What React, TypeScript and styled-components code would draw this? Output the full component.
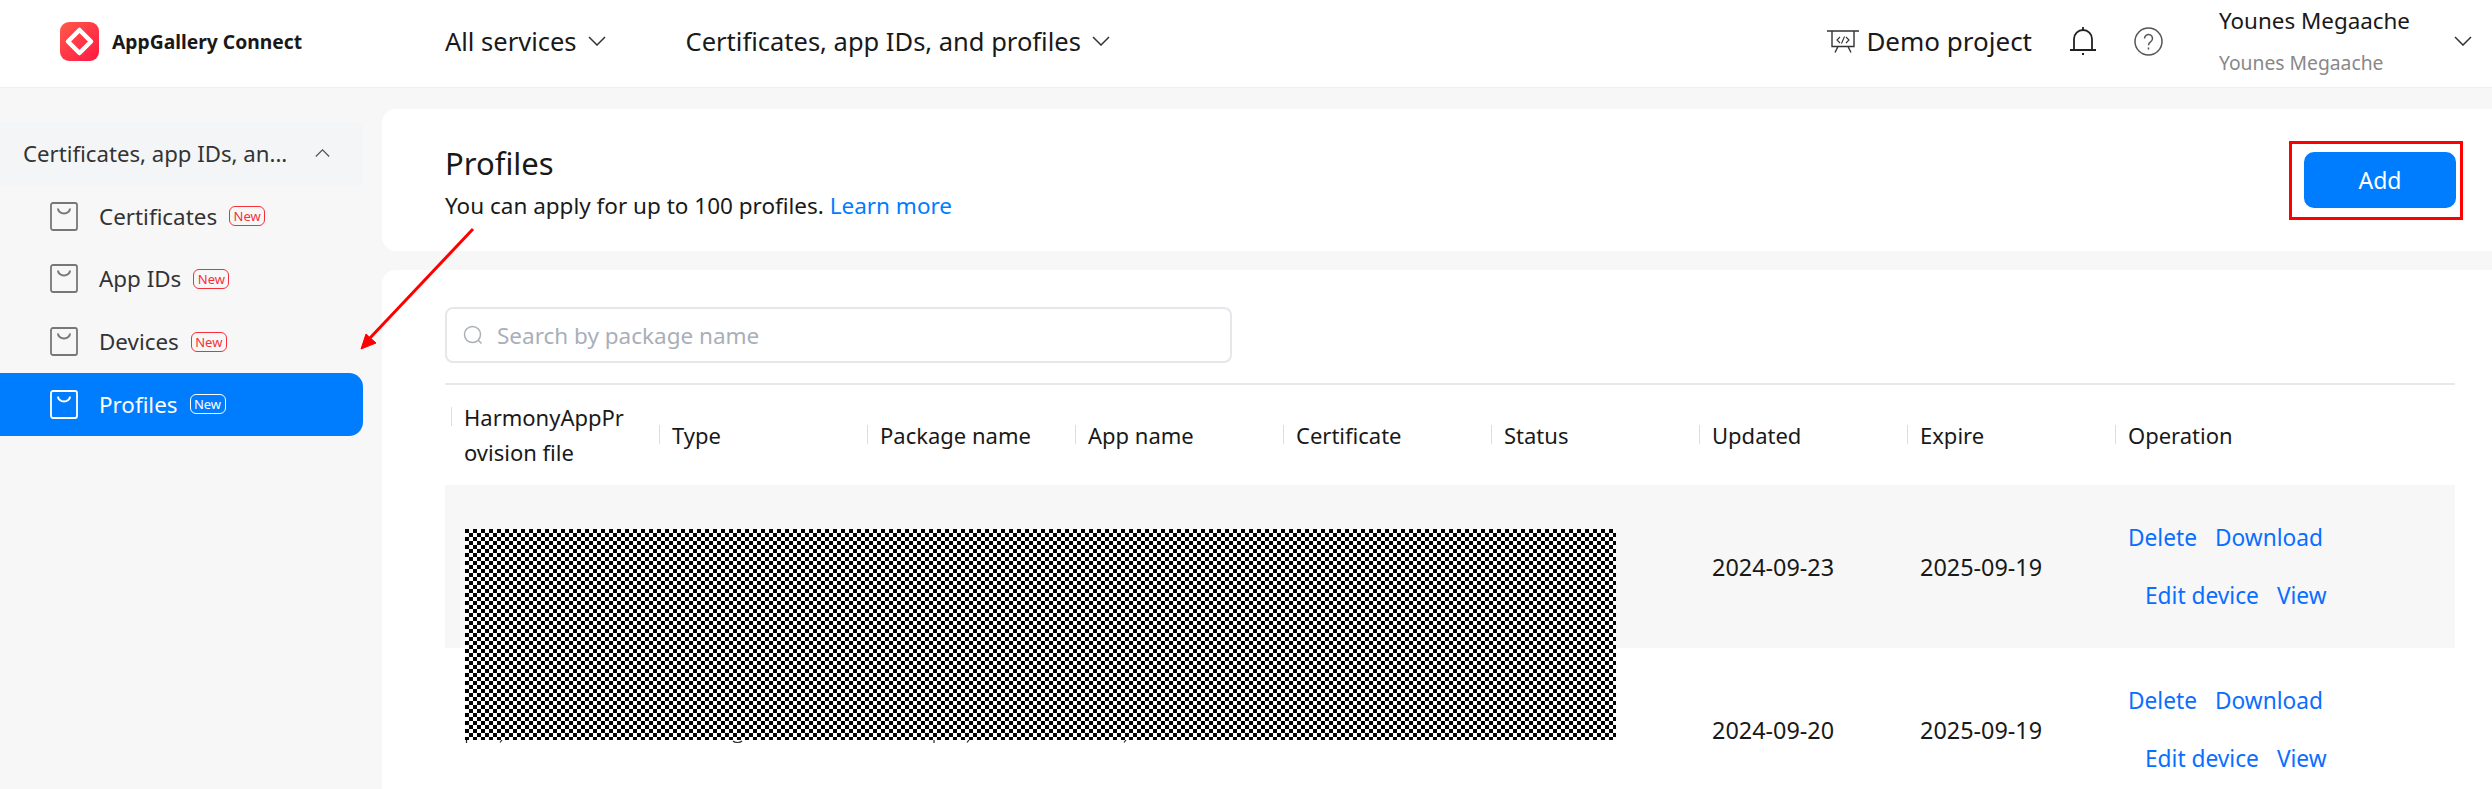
import styled, { createGlobalStyle } from 'styled-components'

const colors = {
  page: '#f7f7f7',
  text: '#191919',
  blue: '#007dff',
  link: '#0a6eff',
  red: '#f5303c',
  border: '#e6e6eb',
}

const GlobalStyle = createGlobalStyle`
  html, body {
    margin: 0;
    padding: 0;
    background: ${colors.page};
    font-family: "Noto Sans", "Open Sans", sans-serif;
    color: ${colors.text};
  }
`

const Page = styled.div`
  position: relative;
  width: 2492px;
  height: 789px;
  overflow: hidden;
`

const TopBar = styled.header`
  display: flex;
  align-items: center;
  height: 88px;
  padding-bottom: 5px;
  background: #fff;
  border-bottom: 1px solid #efefef;
  box-sizing: border-box;
`

const Brand = styled.div`
  display: flex;
  align-items: center;
  gap: 13px;
  width: 445px;
  padding-left: 60px;
  box-sizing: border-box;
  font-size: 19.3px;
  font-weight: 700;
`

const NavItem = styled.div`
  display: flex;
  align-items: center;
  gap: 11px;
  margin-right: 80px;
  font-size: 25.5px;
`

const TopRight = styled.div`
  display: flex;
  align-items: center;
  margin-left: auto;
  height: 100%;
`

const Project = styled.div`
  display: flex;
  align-items: center;
  gap: 7px;
  font-size: 26px;
  margin-right: 37px;
`

const IconSlot = styled.div`
  display: flex;
  margin-right: 37px;
`

const Account = styled.div`
  display: flex;
  flex-direction: column;
  justify-content: space-between;
  height: 68px;
  margin-left: 56px;
  width: 235px;
`

const AccountName = styled.div`
  font-size: 22.4px;
  line-height: 28px;
`

const AccountSub = styled.div`
  font-size: 19.3px;
  line-height: 24px;
  color: #888;
`

const Caret = styled.div`
  display: flex;
  margin-right: 20px;
`

const Body = styled.div`
  display: flex;
`

const Sidebar = styled.nav`
  flex: 0 0 382px;
  padding: 34px 19px 0 0;
  box-sizing: border-box;
`

const GroupRow = styled.div`
  display: flex;
  align-items: center;
  justify-content: space-between;
  height: 63px;
  padding: 0 33px 0 23px;
  background: #f4f5f7;
  font-size: 22.2px;
  color: #333;
`

const MenuRow = styled.div<{ $active?: boolean }>`
  display: flex;
  align-items: center;
  height: 62.67px;
  padding-left: 50px;
  font-size: 22.4px;
  border-radius: 0 14px 14px 0;
  color: ${(p) => (p.$active ? '#fff' : '#333')};
  background: ${(p) => (p.$active ? colors.blue : 'transparent')};
`

const MenuLabel = styled.span`
  margin: 0 12px 0 21px;
`

const NewBadge = styled.span<{ $active?: boolean }>`
  display: inline-flex;
  align-items: center;
  justify-content: center;
  width: 36px;
  height: 20px;
  box-sizing: border-box;
  border: 1px solid ${(p) => (p.$active ? '#fff' : colors.red)};
  border-radius: 6px;
  font-size: 13px;
  color: ${(p) => (p.$active ? '#fff' : colors.red)};
`

const Main = styled.main`
  flex: 1;
  display: flex;
  flex-direction: column;
  gap: 19px;
  padding-top: 21px;
`

const Panel = styled.section`
  background: #fff;
  border-radius: 14px 0 0 14px;
`

const TitlePanel = styled(Panel)`
  display: flex;
  align-items: center;
  justify-content: space-between;
  height: 142px;
  padding: 0 36px 0 63px;
`

const TitleBlock = styled.div`
  padding-top: 3px;
`

const Title = styled.h1`
  margin: 0 0 8px;
  font-size: 31px;
  font-weight: 400;
  line-height: 40px;
`

const Description = styled.p`
  margin: 0;
  font-size: 22.5px;
  line-height: 30px;
`

const TextLink = styled.a`
  color: ${colors.blue};
`

const AddWrap = styled.div`
  position: relative;
`

const AddButton = styled.button`
  display: block;
  width: 152px;
  height: 56px;
  border: none;
  border-radius: 10px;
  background: ${colors.blue};
  color: #fff;
  font-family: inherit;
  font-size: 23px;
`

const Highlight = styled.div`
  position: absolute;
  top: -11px;
  right: -7px;
  bottom: -12px;
  left: -15px;
  border: 3px solid #f00;
`

const ListPanel = styled(Panel)`
  padding: 37px 37px 0 63px;
`

const Search = styled.div`
  display: flex;
  align-items: center;
  gap: 14px;
  width: 787px;
  height: 56px;
  padding-left: 16px;
  box-sizing: border-box;
  border: 2px solid ${colors.border};
  border-radius: 8px;
  font-size: 22.5px;
  color: #a9afb8;
`

const Table = styled.div`
  margin-top: 20px;
  border-top: 2px solid #e8e8e8;
`

const Columns = styled.div`
  display: grid;
  grid-template-columns: repeat(8, 208px) 1fr;
  align-items: center;
  padding-left: 6px;
`

const HeadRow = styled(Columns)`
  height: 100px;
  font-size: 22px;
`

const HeadCell = styled.div`
  position: relative;
  padding: 0 24px 0 13px;
  line-height: 35px;
  overflow-wrap: anywhere;

  &::before {
    content: '';
    position: absolute;
    left: 0;
    top: 7px;
    height: 19px;
    width: 1px;
    background: #ddd;
  }
`

const Rows = styled.div`
  position: relative;
`

const Row = styled(Columns)<{ $shaded?: boolean }>`
  height: 163px;
  font-size: 22.7px;
  background: ${(p) => (p.$shaded ? colors.page : '#fff')};
`

const DateCell = styled.div<{ $col: number }>`
  grid-column: ${(p) => p.$col};
  padding-left: 13px;
  font-size: 23.4px;
`

const Operations = styled.div`
  grid-column: 9;
  display: flex;
  flex-direction: column;
  gap: 28px;
  padding-left: 13px;
`

const OperationLine = styled.div<{ $indent?: boolean }>`
  display: flex;
  gap: 18px;
  line-height: 30px;
  padding-left: ${(p) => (p.$indent ? '17px' : '0')};
  color: ${colors.link};
`

const Redaction = styled.div`
  position: absolute;
  left: 20px;
  top: 44px;
  width: 1151px;
  height: 211px;
  background: repeating-conic-gradient(#000 0 25%, #fff 0 50%) 4px 0 / 8px 8px;
`

const Remnants = styled.svg`
  position: absolute;
  left: 20px;
  top: 255px;
`

const Arrow = styled.svg`
  position: absolute;
  left: 350px;
  top: 220px;
`

const Chevron = ({ up, color = '#333', width = 18 }: { up?: boolean; color?: string; width?: number }) => (
  <svg width={width} height={width * 0.56} viewBox="0 0 18 10" fill="none" stroke={color} strokeWidth="1.5">
    <path d={up ? 'M1 9 9 1l8 8' : 'M1 1l8 8 8-8'} />
  </svg>
)

const Logo = () => (
  <svg width="39" height="39" viewBox="0 0 39 39">
    <defs>
      <linearGradient id="logoFill" x1="0" y1="0" x2="1" y2="1">
        <stop offset="0" stopColor="#ff5a4a" />
        <stop offset="1" stopColor="#ff1744" />
      </linearGradient>
    </defs>
    <rect width="39" height="39" rx="9" fill="url(#logoFill)" />
    <path d="M19.5 8 31 19.5 19.5 31 8 19.5Z" fill="none" stroke="#fff" strokeWidth="4.5" strokeLinejoin="round" />
  </svg>
)

const ProjectIcon = () => (
  <svg width="32" height="23" viewBox="0 0 32 23" fill="none" stroke="#333" strokeWidth="1.4">
    <path d="M0 1h32M5 1v15.5h22V1M11 16.5 8 22.5M21 16.5l3 6" />
    <path d="M13 7 10 10l3 3M19 7l3 3-3 3M17.5 6.5l-3 7" strokeWidth="1.1" />
  </svg>
)

const BellIcon = () => (
  <svg width="28" height="28" viewBox="0 0 28 28" fill="none" stroke="#222" strokeWidth="1.8">
    <path d="M5 22V12a9 9 0 0 1 18 0v10" />
    <path d="M14 0v3" />
    <path d="M1 23h26" strokeWidth="2" />
    <path d="M13 27h2" />
  </svg>
)

const HelpIcon = () => (
  <svg width="29" height="29" viewBox="0 0 29 29" fill="none" stroke="#555" strokeWidth="1.5">
    <circle cx="14.5" cy="14.5" r="13.5" />
    <path d="M10.5 11.5a4 4 0 1 1 6.3 3.2c-1.5 1-2.3 1.8-2.3 3.6" />
    <path d="M14.5 20.5v2" />
  </svg>
)

const BagIcon = ({ color }: { color: string }) => (
  <svg width="28" height="29" viewBox="0 0 28 29" fill="none" stroke={color} strokeWidth="1.8">
    <rect x="1" y="1" width="26" height="27" rx="2" />
    <path d="M8 6.5a6 5 0 0 0 12 0" strokeWidth="2" />
  </svg>
)

const SearchIcon = () => (
  <svg width="20" height="20" viewBox="0 0 20 20" fill="none" stroke="#a9afb8" strokeWidth="1.5">
    <circle cx="9.5" cy="9.5" r="8" />
    <path d="m15 15 3.5 3.5" />
  </svg>
)

const menu = ['Certificates', 'App IDs', 'Devices', 'Profiles']
const heads = [
  'HarmonyAppProvision file',
  'Type',
  'Package name',
  'App name',
  'Certificate',
  'Status',
  'Updated',
  'Expire',
  'Operation',
]
const records = [
  { updated: '2024-09-23', expire: '2025-09-19', shaded: true },
  { updated: '2024-09-20', expire: '2025-09-19', shaded: false },
]

export default function App() {
  return (
    <Page>
      <GlobalStyle />
      <TopBar>
        <Brand>
          <Logo />
          AppGallery Connect
        </Brand>
        <NavItem>
          All services <Chevron />
        </NavItem>
        <NavItem>
          Certificates, app IDs, and profiles <Chevron />
        </NavItem>
        <TopRight>
          <Project>
            <ProjectIcon />
            Demo project
          </Project>
          <IconSlot>
            <BellIcon />
          </IconSlot>
          <HelpIcon />
          <Account>
            <AccountName>Younes Megaache</AccountName>
            <AccountSub>Younes Megaache</AccountSub>
          </Account>
          <Caret>
            <Chevron />
          </Caret>
        </TopRight>
      </TopBar>
      <Body>
        <Sidebar>
          <GroupRow>
            Certificates, app IDs, an...
            <Chevron up color="#555" width={15} />
          </GroupRow>
          {menu.map((name) => {
            const active = name === 'Profiles'
            return (
              <MenuRow key={name} $active={active}>
                <BagIcon color={active ? '#fff' : '#777'} />
                <MenuLabel>{name}</MenuLabel>
                <NewBadge $active={active}>New</NewBadge>
              </MenuRow>
            )
          })}
        </Sidebar>
        <Main>
          <TitlePanel>
            <TitleBlock>
              <Title>Profiles</Title>
              <Description>
                You can apply for up to 100 profiles. <TextLink>Learn more</TextLink>
              </Description>
            </TitleBlock>
            <AddWrap>
              <AddButton>Add</AddButton>
              <Highlight />
            </AddWrap>
          </TitlePanel>
          <ListPanel>
            <Search>
              <SearchIcon />
              Search by package name
            </Search>
            <Table>
              <HeadRow>
                {heads.map((head) => (
                  <HeadCell key={head}>{head}</HeadCell>
                ))}
              </HeadRow>
              <Rows>
                {records.map((record) => (
                  <Row key={record.updated} $shaded={record.shaded}>
                    <DateCell $col={7}>{record.updated}</DateCell>
                    <DateCell $col={8}>{record.expire}</DateCell>
                    <Operations>
                      <OperationLine>
                        <span>Delete</span>
                        <span>Download</span>
                      </OperationLine>
                      <OperationLine $indent>
                        <span>Edit device</span>
                        <span>View</span>
                      </OperationLine>
                    </Operations>
                  </Row>
                ))}
                <Redaction />
                {/* bits of descenders the redaction left uncovered */}
                <Remnants width="670" height="5" viewBox="0 0 670 5" fill="none" stroke="#223" strokeWidth="1.2">
                  <path d="M1.5 0v3M35 2.5l2-2.5M268 1c2 2 7 2 9 0M469 0v3M502 2.5l2-2.5M659 2.5l2-2.5" />
                </Remnants>
              </Rows>
            </Table>
          </ListPanel>
        </Main>
      </Body>
      <Arrow width="130" height="135" viewBox="0 0 130 135">
        <path d="M123 9 20 118" stroke="#f00" strokeWidth="3" fill="none" />
        <path d="M11 129 16 114 26 123Z" fill="#f00" stroke="#f00" />
      </Arrow>
    </Page>
  )
}
